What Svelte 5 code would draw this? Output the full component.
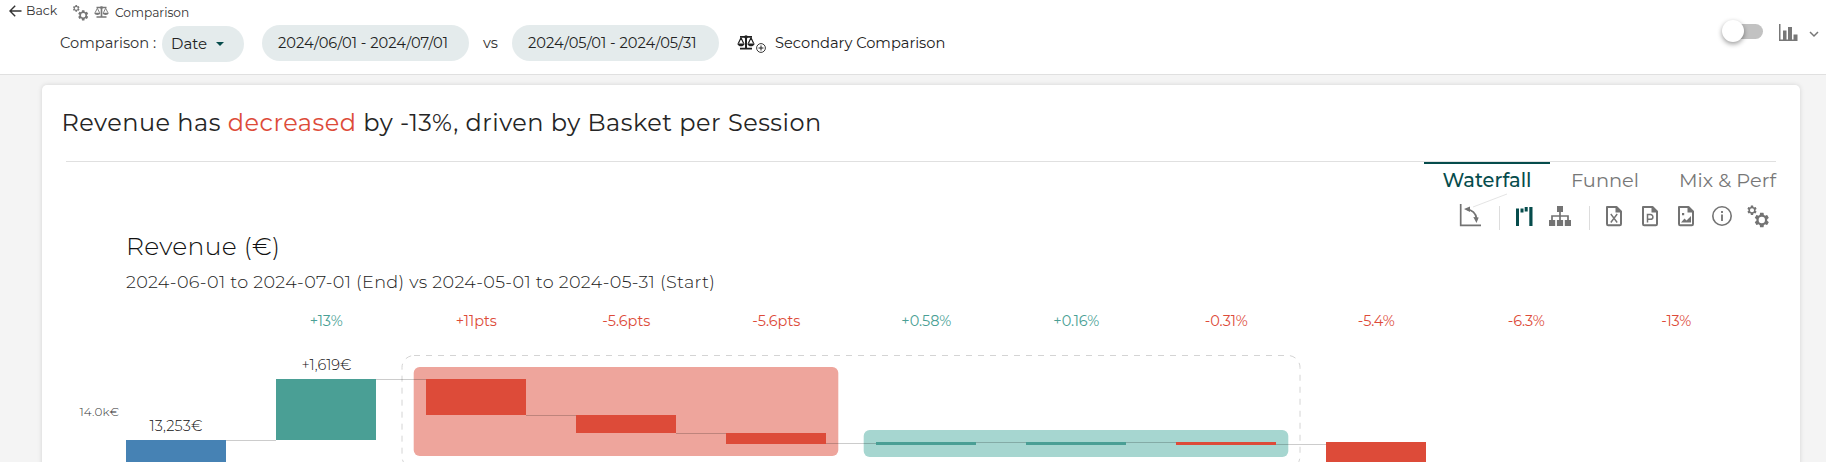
<script>
  const changes = [
    { x: 326.3, t: '+13%', w: 33, up: true },
    { x: 476.3, t: '+11pts', w: 41 },
    { x: 626.3, t: '-5.6pts', w: 48 },
    { x: 776.3, t: '-5.6pts', w: 48 },
    { x: 926.3, t: '+0.58%', w: 50, up: true },
    { x: 1076.3, t: '+0.16%', w: 46, up: true },
    { x: 1226.3, t: '-0.31%', w: 43 },
    { x: 1376.3, t: '-5.4%', w: 37 },
    { x: 1526.3, t: '-6.3%', w: 37 },
    { x: 1676.3, t: '-13%', w: 30 }
  ];
  const bars = [
    { x: 126, y: 440, h: 40, c: '#4682b4' },
    { x: 276, y: 379, h: 61, c: '#4a9f95' },
    { x: 426, y: 379, h: 36, c: '#dd4b39' },
    { x: 576, y: 415, h: 18, c: '#dd4b39' },
    { x: 726, y: 433, h: 11, c: '#dd4b39' },
    { x: 876, y: 442, h: 3, c: '#4a9f95' },
    { x: 1026, y: 442, h: 3, c: '#4a9f95' },
    { x: 1176, y: 442, h: 3, c: '#dd4b39' },
    { x: 1326, y: 442, h: 40, c: '#dd4b39' }
  ];
  const links = [[226, 440.5], [376, 379.5], [526, 415.5], [676, 433.5], [826, 443.5], [976, 442.5], [1126, 442.5], [1276, 444.5]];
</script>

{#snippet gear(cx, cy, r)}
  <g transform="translate({cx} {cy}) scale({r / 10}) translate(-12 -12)">
    <path fill-rule="evenodd" d="M19.43 12.98c.04-.32.07-.64.07-.98s-.03-.66-.07-.98l2.11-1.65c.19-.15.24-.42.12-.64l-2-3.46c-.12-.22-.39-.3-.61-.22l-2.49 1c-.52-.4-1.08-.73-1.69-.98l-.38-2.65A.49.49 0 0 0 14 2h-4c-.25 0-.46.18-.49.42l-.38 2.65c-.61.25-1.17.59-1.69.98l-2.49-1c-.23-.09-.49 0-.61.22l-2 3.46c-.13.22-.07.49.12.64l2.11 1.65c-.04.32-.07.65-.07.98s.03.66.07.98l-2.11 1.65c-.19.15-.24.42-.12.64l2 3.46c.12.22.39.3.61.22l2.49-1c.52.4 1.08.73 1.69.98l.38 2.65c.03.24.24.42.49.42h4c.25 0 .46-.18.49-.42l.38-2.65c.61-.25 1.17-.59 1.69-.98l2.49 1c.23.09.49 0 .61-.22l2-3.46c.12-.22.07-.49-.12-.64zM12 16.4a4.4 4.4 0 1 1 0-8.8a4.4 4.4 0 0 1 0 8.8z" />
  </g>
{/snippet}

{#snippet gears(size)}
  <svg width={size} height={size} viewBox="0 0 24 24" fill="currentColor">
    {@render gear(6, 6.2, 4.7)}
    {@render gear(15.8, 16, 7.2)}
  </svg>
{/snippet}

{#snippet scales(w, h)}
  <svg width={w} height={h} viewBox="0 0 18 16" preserveAspectRatio="none" fill="none" stroke="currentColor" stroke-width="2">
    <path d="M3 2h12M9 1v13M3 14.500h12" />
    <path d="M4 3L1.300 9M4 3l2.700 6M14 3l-2.700 6M14 3l2.700 6" stroke-width="1.200" />
    <path d="M.3 9h7.400c-.5 4-6.900 4-7.400 0zM10.300 9h7.400c-.5 4-6.900 4-7.400 0z" fill="currentColor" stroke="none" />
    <circle cx="9" cy="2" r="1.800" fill="currentColor" stroke="none" />
  </svg>
{/snippet}

{#snippet doc()}
  <path d="M5 3h9.500l4.500 4.500V20a1.200 1.200 0 0 1-1.200 1.200H6.200A1.200 1.200 0 0 1 5 20z" fill="none" stroke="currentColor" stroke-width="2" stroke-linejoin="round" />
  <path d="M13.500 2.500v6H20z" />
{/snippet}

<div class="page">
  <header>
    <nav>
      <svg class="arrow" width="13" height="12" viewBox="0 0 13 12" fill="none" stroke="#333" stroke-width="1.400"><path d="M12.500 6H1.200M6.200.8L1 6l5.200 5.200" /></svg>
      <span class="back">Back</span>
      <span class="crumb">
        <i class="g">{@render gears(17)}</i>
        <i class="s">{@render scales(15, 12)}</i>
        <span class="cmp">Comparison</span>
      </span>
    </nav>
    <div class="filters">
      <span class="label">Comparison :</span>
      <button class="pill date"><span>Date</span><i class="caret"></i></button>
      <button class="pill range">2024/06/01 - 2024/07/01</button>
      <span class="vs">vs</span>
      <button class="pill range">2024/05/01 - 2024/05/31</button>
      <span class="secondary">
        {@render scales(18, 15)}
        <svg class="plus" width="10" height="10" viewBox="0 0 10 10" fill="none" stroke="#222"><circle cx="5" cy="5" r="4.400" stroke-width=".9" /><path d="M5 2.500v5M2.500 5h5" /></svg>
        <span>Secondary Comparison</span>
      </span>
    </div>
    <div class="tools">
      <span class="switch"><i></i></span>
      <svg class="chart-icon" width="19" height="18" viewBox="0 0 19 18" fill="#777"><path d="M0 0h1.500v15.500H18.500V17H0zM4 6.500h3.500V16H4zM9 3h4v13H9zM14.500 10.500H18.500V16h-4z" /></svg>
      <svg width="10" height="7" viewBox="0 0 10 7" fill="none" stroke="#777" stroke-width="1.500"><path d="M1 1l4 4 4-4" /></svg>
    </div>
  </header>

  <main>
    <h1>Revenue has <em>decreased</em> by -13%, driven by Basket per Session</h1>
    <div class="tabs">
      <button class="active">Waterfall</button>
      <button class="funnel">Funnel</button>
      <button class="mix">Mix &amp; Perf</button>
    </div>
    <div class="toolbar">
      <svg class="spill" viewBox="0 0 24 24"><path d="M15 3L49-10" stroke="#ddd" stroke-width=".8" /><path d="M2.700 0v21.300H23M9 5.500c5 .3 9 4 9.500 9" fill="none" stroke="currentColor" stroke-width="1.700" /><path d="M6 5l6-2.400v5.400zM15.300 13l5.400.5-2.200 5.500z" /></svg>
      <hr />
      <svg class="on" viewBox="0 0 24 24"><path d="M4 4.500h3V22H4zM8.500 4.500h3v4h-3zM12.700 3h3v4.500h-3zM17.300 3h3.200v19h-3.200z" /></svg>
      <svg viewBox="0 0 24 24"><path d="M9 2h6v6H9zM1 16h6.200v6H1zM8.900 16h6.200v6H8.900zM16.800 16H23v6h-6.200z" /><path d="M12 8v8M4 16v-4h16v4" fill="none" stroke="currentColor" stroke-width="1.700" /></svg>
      <hr />
      <svg viewBox="0 0 24 24">{@render doc()}<path d="M8.800 10l6.400 8.500M15.200 10l-6.400 8.500" fill="none" stroke="currentColor" stroke-width="1.400" /></svg>
      <svg viewBox="0 0 24 24">{@render doc()}<path d="M9.500 18.500V10.500h3a2.300 2.300 0 0 1 0 4.800h-3" fill="none" stroke="currentColor" stroke-width="1.500" /></svg>
      <svg viewBox="0 0 24 24">{@render doc()}<path d="M7 18.500l3.500-4 2 2 4.500-4.500v6.500zM8 9h2.200v2.200H8z" /></svg>
      <svg viewBox="0 0 24 24"><circle cx="12" cy="12" r="9.200" fill="none" stroke="currentColor" stroke-width="1.600" /><path d="M11.100 10.500h1.800V17h-1.800zM11.100 7h1.800v2h-1.800z" /></svg>
      {@render gears(24)}
    </div>

    <svg class="chart" viewBox="42 231 1758 231" width="1758" height="231">
      <text class="title" x="126" y="255" textLength="154">Revenue (€)</text>
      <text class="sub" x="126" y="288" textLength="589">2024-06-01 to 2024-07-01 (End) vs 2024-05-01 to 2024-05-31 (Start)</text>
      {#each changes as c}
        <text class="pct" class:up={c.up} x={c.x - c.w / 2} y="326.300" textLength={c.w}>{c.t}</text>
      {/each}
      <text class="axis" x="79.500" y="416" textLength="39.500">14.0k€</text>
      <text class="val" x="149.500" y="431" textLength="53">13,253€</text>
      <text class="val" x="301.500" y="370" textLength="50">+1,619€</text>
      <rect x="402" y="355.500" width="898" height="113" rx="12" fill="none" stroke="#d4d4d4" stroke-dasharray="6 6" />
      <rect x="413.700" y="367" width="424.600" height="89" rx="6" fill="#eea59c" />
      <rect x="863.700" y="430" width="424.600" height="27" rx="6" fill="#a6d6d0" />
      {#each bars as b}
        <rect x={b.x} y={b.y} width="100" height={b.h} fill={b.c} />
      {/each}
      {#each links as [x, y]}
        <path d="M{x} {y}h50" stroke="#000" stroke-opacity=".2" />
      {/each}
    </svg>
  </main>
</div>

<style>
  :global(body) { background: #f4f4f4; overflow: hidden; }
  .page { height: 462px; overflow: hidden; font-family: Montserrat, Inter, sans-serif; color: #333; }
  button { font: inherit; border: 0; background: none; padding: 0; color: inherit; white-space: nowrap; }
  svg { display: block; flex: none; }
  header { position: relative; height: 74px; background: #fff; border-bottom: 1px solid #e0e0e0; }
  nav { display: flex; align-items: flex-start; height: 21px; padding-left: 9px; box-sizing: border-box; font-size: 12px; line-height: 14px; }
  .arrow { margin-top: 5px; }
  .back { width: 46px; margin: 4px 0 0 4px; font-size: 12.500px; }
  .crumb { display: flex; }
  .g { color: #777; margin: 4px 5px 0 0; }
  .s { color: #777; margin: 6px 6px 0 0; }
  .cmp { margin-top: 6px; font-size: 12.200px; }
  .filters { display: flex; align-items: center; height: 43px; padding-left: 60px; font-size: 14.650px; white-space: nowrap; }
  .label { width: 102px; }
  .pill { height: 36px; border-radius: 18px; background: #e4ebec; color: #222; }
  .date { display: flex; align-items: center; width: 82px; padding-left: 9px; margin: 2px 18px 0 0; font-size: 15px; }
  .date span { width: 35px; }
  .caret { margin-left: 10px; border: 4px solid transparent; border-top-color: #064c4c; border-bottom: 0; }
  .range { width: 207px; padding-left: 16px; text-align: left; }
  .vs { width: 43px; text-align: center; }
  .secondary { display: flex; align-items: center; margin-left: 18px; color: #222; }
  .plus { margin: 10px 9px 0 1px; }
  .tools { position: absolute; right: 7px; top: 19px; display: flex; align-items: center; height: 24px; }
  .switch { width: 36px; height: 15px; border-radius: 8px; background: #c2c2c2; margin-right: 16px; }
  .switch i { display: block; width: 22px; height: 22px; margin: -4px 0 0 -5px; border-radius: 50%; background: #fff; box-shadow: 0 2px 5px #0006; }
  .chart-icon { margin: 3px 11px 0 0; }
  .tools svg:last-child { margin-top: 7px; }
  main { width: 1758px; height: 390px; margin: 10px 0 0 42px; border-radius: 5px; background: #fff; box-shadow: 0 0 5px #0002; }
  h1 { margin: 0; height: 76px; padding: 21px 0 0 19.500px; box-sizing: border-box; font-size: 24px; font-weight: 400; line-height: 34px; letter-spacing: .49px; color: #252525; white-space: nowrap; }
  em { font-style: normal; color: #dd4b39; }
  .tabs { display: flex; justify-content: flex-end; margin: 0 24px; border-top: 1px solid #e0e0e0; height: 39px; font-size: 19.400px; color: #777; }
  .tabs button { height: 36px; padding-bottom: 2px; border-top: 2px solid transparent; }
  .tabs .active { width: 126px; color: #064c4c; border-color: #064c4c; font-weight: 500; }
  .tabs .funnel { width: 110px; }
  .tabs .mix { width: 116px; text-align: right; }
  .toolbar { display: flex; justify-content: flex-end; align-items: center; gap: 12px; height: 30px; padding-right: 30px; color: #737373; fill: currentColor; }
  .toolbar > svg { width: 24px; height: 24px; }
  .toolbar .spill { overflow: visible; }
  .on { color: #064c4c; fill: currentColor; }
  hr { width: 1px; height: 24px; margin: 4px 0 0 5px; border: 0; background: #ddd; }
  .title { font-size: 25px; font-weight: 300; fill: #111; }
  .sub { font-size: 17.600px; font-weight: 300; fill: #222; }
  .pct { font-size: 14.500px; font-weight: 400; fill: #dd4b39; }
  .pct.up { fill: #4a9f95; }
  .axis { font-size: 12px; font-weight: 300; fill: #333; }
  .val { font-size: 14.500px; font-weight: 300; fill: #111; }
</style>
